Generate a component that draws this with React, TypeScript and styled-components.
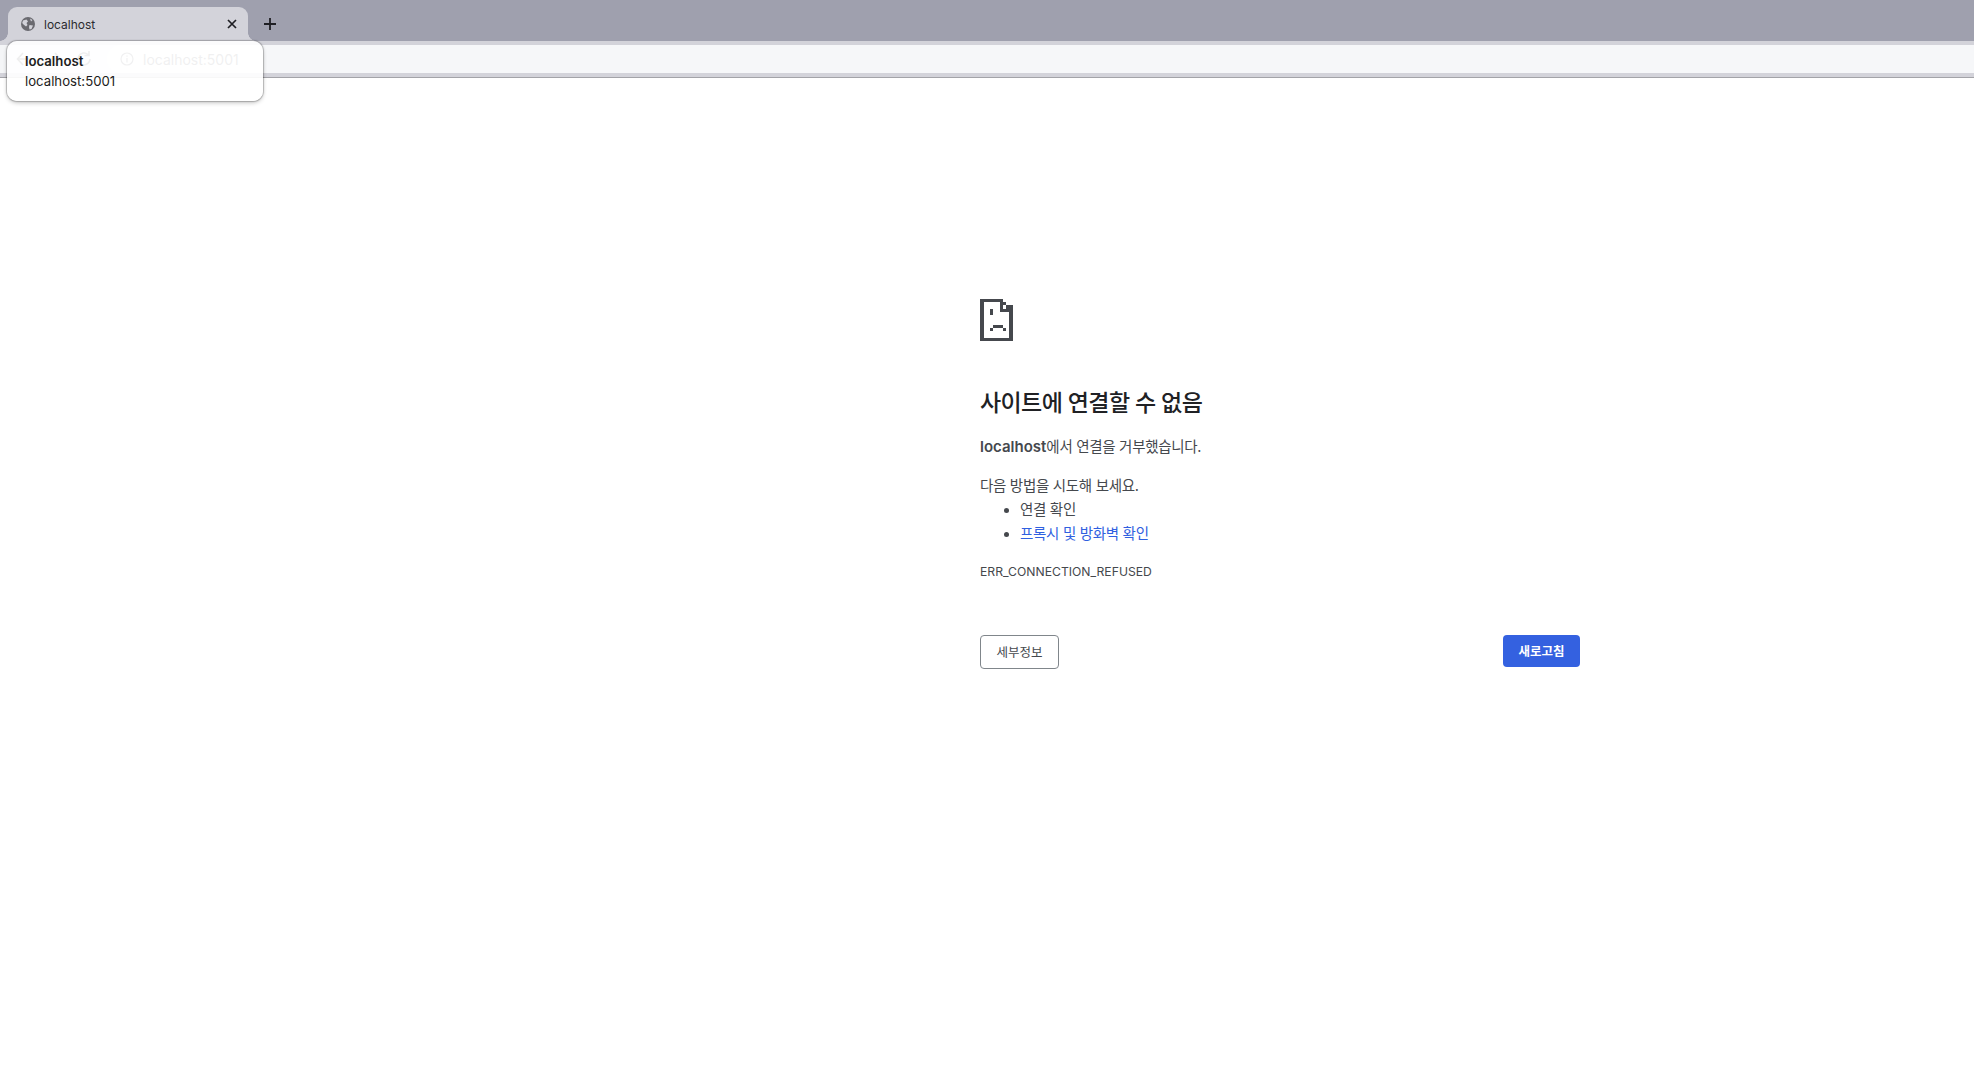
import React from "react";
import styled, { createGlobalStyle } from "styled-components";

const Global = createGlobalStyle`
  html, body { margin: 0; padding: 0; background: #fff; }
  body { font-family: Inter, "Noto Sans CJK KR", sans-serif; }
  * { box-sizing: border-box; }
`;

const Page = styled.div`
  position: relative;
  width: 1974px;
  height: 1086px;
  overflow: hidden;
  background: #fff;
`;

const TabStrip = styled.div`
  display: flex;
  align-items: flex-end;
  height: 41px;
  padding-left: 8px;
  background: #9fa0ae;
`;

const Tab = styled.div`
  position: relative;
  display: flex;
  align-items: center;
  width: 240px;
  height: 34px;
  padding: 0 11px 0 13px;
  background: #d3d3da;
  border-radius: 9px 9px 0 0;
  color: #2b2b2f;
  font-size: 12px;
  &::before, &::after {
    content: "";
    position: absolute;
    bottom: 0;
    width: 8px;
    height: 8px;
    background: radial-gradient(circle at var(--cx) 0, #9fa0ae 7.5px, #d3d3da 8px);
  }
  &::before { left: -8px; --cx: 0; }
  &::after { right: -8px; --cx: 100%; }
`;

const TabTitle = styled.span`
  flex: 1;
  margin-left: 9px;
`;

const NewTab = styled.div`
  display: flex;
  align-items: center;
  justify-content: center;
  width: 26px;
  height: 26px;
  margin: 0 0 4px 9px;
  color: #1f1f24;
`;

const ToolbarBand = styled.div`
  height: 37px;
  padding: 4px 0;
  background: #d3d3da;
  border-bottom: 1px solid #a3a3a8;
`;

const Toolbar = styled.div`
  display: flex;
  align-items: center;
  height: 28px;
  padding-left: 14px;
  gap: 10px;
  background: #f4f5f7;
  color: #4a4a50;
`;

const AddressPill = styled.div`
  display: flex;
  align-items: center;
  flex: 1;
  height: 28px;
  margin-left: 3px;
  padding-left: 13px;
  gap: 9px;
  border-radius: 14px 0 0 14px;
  background: #f6f7f9;
  font-size: 14px;
  color: #5a5a60;
`;

const Tooltip = styled.div`
  position: absolute;
  left: 7px;
  top: 41px;
  width: 256px;
  height: 60px;
  padding: 10px 18px;
  border-radius: 10px;
  background: rgba(255, 255, 255, 0.91);
  box-shadow: 0 0 1px 1px rgba(0, 0, 0, 0.22), 0 2px 4px rgba(0, 0, 0, 0.22);
  color: #1c1c20;
  font-size: 13.2px;
  line-height: 20px;
`;

const TooltipTitle = styled.div`
  font-weight: 600;
`;

const Main = styled.main`
  width: 600px;
  margin-left: 980px;
  padding-top: 221px;
  color: #45484d;
  font-size: 14.5px;
  letter-spacing: -0.3px;
`;

const ErrorIcon = styled.svg`
  display: block;
  width: 33px;
  height: 42px;
  color: #45484d;
`;

const Heading = styled.h1`
  margin: 46px 0 0;
  height: 32px;
  color: #202124;
  font-size: 23px;
  font-weight: 500;
  letter-spacing: -0.6px;
  line-height: 32px;
`;

const Summary = styled.p`
  margin: 16px 0 0;
  line-height: 24px;
`;

const Strong = styled.strong`
  font-size: 15px;
  font-weight: 600;
  letter-spacing: 0;
`;

const Suggestions = styled.div`
  margin-top: 15px;
  line-height: 24px;
`;

const List = styled.ul`
  margin: 0;
  padding-left: 40px;
`;

const Link = styled.a`
  color: #2f60e0;
  text-decoration: none;
`;

const ErrorCode = styled.div`
  margin-top: 14px;
  height: 24px;
  font-size: 12.2px;
  letter-spacing: 0;
  line-height: 24px;
`;

const Buttons = styled.div`
  display: flex;
  justify-content: space-between;
  align-items: flex-start;
  margin-top: 51px;
`;

const DetailsButton = styled.button`
  width: 79px;
  height: 34px;
  padding: 0 0 2px;
  background: #fff;
  border: 1px solid #80868b;
  border-radius: 4px;
  color: #45484d;
  font: 400 12.5px Inter, "Noto Sans CJK KR", sans-serif;
`;

const ReloadButton = styled.button`
  width: 77px;
  height: 32px;
  padding: 0 0 2px;
  background: #3461e0;
  border: 0;
  border-radius: 4px;
  color: #fff;
  font: 600 12.5px Inter, "Noto Sans CJK KR", sans-serif;
`;

const Globe = () => (
  <svg width="14" height="14" viewBox="0 0 14 14">
    <circle cx="7" cy="7" r="7" fill="#6a6a70" />
    <path d="M2 3.5 L5.5 2.5 L7 4.5 L5.5 6 L6.5 8 L5 9.5 L2.5 7.5 L1.2 6 Z M8.5 8 L12 8.5 L10.5 12 L8.5 12.5 L8 10 Z M9 1.5 L11.5 3 L10 4.5 Z" fill="#d3d3da" />
  </svg>
);

const CloseIcon = () => (
  <svg width="10" height="10" viewBox="0 0 10 10">
    <path d="M1 1 L9 9 M9 1 L1 9" stroke="#1f1f24" strokeWidth="1.7" />
  </svg>
);

const PlusIcon = () => (
  <svg width="14" height="14" viewBox="0 0 14 14">
    <path d="M7 1 V13 M1 7 H13" stroke="currentColor" strokeWidth="1.8" />
  </svg>
);

const ToolIcon = ({ d }: { d: string }) => (
  <svg width="20" height="20" viewBox="0 0 20 20" fill="none" stroke="currentColor" strokeWidth="1.6">
    <path d={d} />
  </svg>
);

const InfoIcon = () => (
  <svg width="14" height="14" viewBox="0 0 14 14" fill="none" stroke="currentColor" strokeWidth="1.1">
    <circle cx="7" cy="7" r="6" />
    <path d="M7 6 V10.5 M7 3.4 V4.8" />
  </svg>
);

const SadFace = () => (
  <ErrorIcon viewBox="0 0 10 13" shapeRendering="crispEdges" fill="currentColor">
    <rect x="0" y="0" width="6.9" height="1" />
    <rect x="0" y="0" width="1" height="13" />
    <rect x="0" y="12" width="10" height="1" />
    <rect x="9" y="2" width="1" height="11" />
    <rect x="6" y="0" width="1" height="4" />
    <rect x="6" y="3" width="4" height="1" />
    <rect x="7" y="1" width="1" height="1" />
    <rect x="8" y="2" width="1" height="1" />
    <rect x="3" y="3" width="1" height="2" />
    <rect x="4" y="8" width="3" height="1" />
    <rect x="3" y="9" width="1" height="1" />
    <rect x="7" y="9" width="1" height="1" />
  </ErrorIcon>
);

export default function App() {
  return (
    <Page>
      <Global />
      <TabStrip>
        <Tab>
          <Globe />
          <TabTitle>localhost</TabTitle>
          <CloseIcon />
        </Tab>
        <NewTab>
          <PlusIcon />
        </NewTab>
      </TabStrip>
      <ToolbarBand>
        <Toolbar>
          <ToolIcon d="M17 10 H4 M9 4 L3.5 10 L9 16" />
          <ToolIcon d="M3 10 H16 M11 4 L16.5 10 L11 16" />
          <ToolIcon d="M16 10 A6 6 0 1 1 14 5.5 M15 2 V6.5 H10.5" />
          <AddressPill>
            <InfoIcon />
            localhost:5001
          </AddressPill>
        </Toolbar>
      </ToolbarBand>
      <Tooltip>
        <TooltipTitle>localhost</TooltipTitle>
        <div>localhost:5001</div>
      </Tooltip>
      <Main>
        <SadFace />
        <Heading>사이트에 연결할 수 없음</Heading>
        <Summary>
          <Strong>localhost</Strong>에서 연결을 거부했습니다.
        </Summary>
        <Suggestions>
          다음 방법을 시도해 보세요.
          <List>
            <li>연결 확인</li>
            <li>
              <Link href="#">프록시 및 방화벽 확인</Link>
            </li>
          </List>
        </Suggestions>
        <ErrorCode>ERR_CONNECTION_REFUSED</ErrorCode>
        <Buttons>
          <DetailsButton>세부정보</DetailsButton>
          <ReloadButton>새로고침</ReloadButton>
        </Buttons>
      </Main>
    </Page>
  );
}
